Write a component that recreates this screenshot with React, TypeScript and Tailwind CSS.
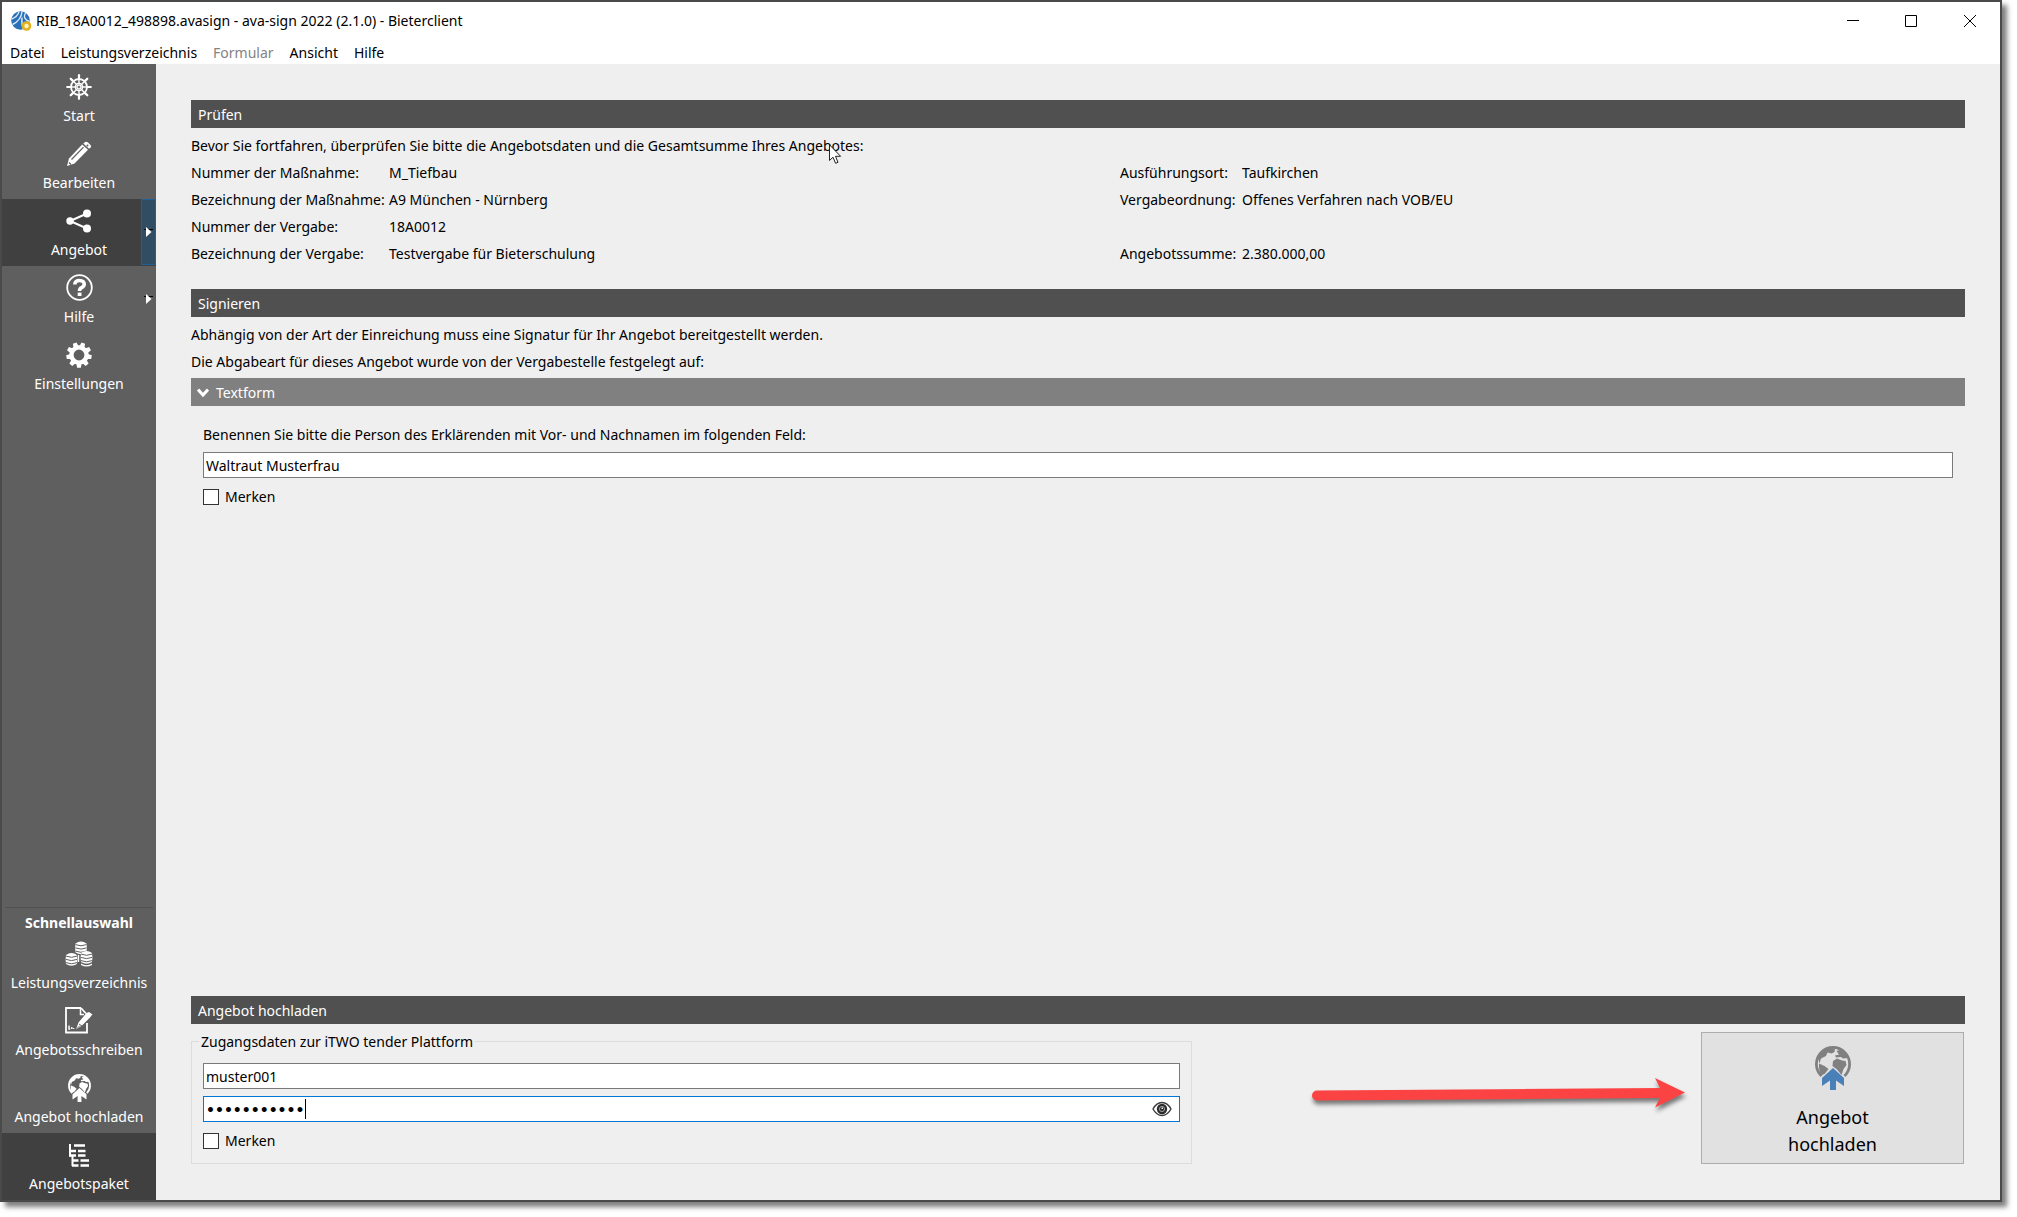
import { useState, type ReactNode } from "react";

const SPOKES = [0, 45, 90, 135, 180, 225, 270, 315];
const TEETH = [0, 40, 80, 120, 160, 200, 240, 280, 320];

function AppLogo() {
  return (
    <svg width="21" height="21" viewBox="0 0 21 21" aria-hidden="true">
      <circle cx="9.5" cy="9.5" r="9.3" fill="#2a70b8" />
      <path d="M8 0.6C7 4 5 6.500 0.600 8M11 0.500C10.500 7 7.500 10.500 1.500 13.500M14.500 2C12 6 14 9 18.500 10.500M11 6.500C10.500 11 11 15 12.500 18.500" fill="none" stroke="#d8eaf8" strokeWidth="1.400" />
      <circle cx="15.500" cy="15" r="4.800" fill="#e3b21c" />
      <circle cx="15.500" cy="15" r="2.200" fill="#fff6cf" />
    </svg>
  );
}

function WheelIcon() {
  return (
    <svg width="26" height="26" viewBox="0 0 26 26" fill="none" stroke="white" aria-hidden="true">
      <circle cx="13" cy="13" r="8" strokeWidth="1.800" />
      <circle cx="13" cy="13" r="3.600" strokeWidth="1.400" />
      {SPOKES.map((angle) => (
        <g key={angle} transform={`rotate(${angle} 13 13)`}>
          <path d="M13 12V1.500" strokeWidth="1.400" />
          <path d="M13 4V1.200" strokeWidth="2.200" strokeLinecap="round" />
        </g>
      ))}
    </svg>
  );
}

function PencilIcon() {
  return (
    <svg width="26" height="26" viewBox="0 0 26 26" aria-hidden="true">
      <path d="M1 25L3 17.500L16.200 3.500L22 8.800L8.500 22.500Z" fill="white" />
      <path d="M17.300 2.500L19.200 0.900Q20.500 0.200 22 1.400L24.500 3.900Q25.600 5.200 24.700 6.300L23.100 7.800Z" fill="white" />
      <path d="M5.500 18.500L17.500 6.200M3 21.500L5 23.500" stroke="#5f5f5f" strokeWidth="1.200" />
      <circle cx="21.500" cy="4.500" r="1" fill="#5f5f5f" />
    </svg>
  );
}

function ShareIcon() {
  return (
    <svg width="26" height="26" viewBox="0 0 26 26" fill="white" stroke="white" aria-hidden="true">
      <path d="M21 5.500L4 13L21 20.500" fill="none" strokeWidth="2" />
      <circle cx="4" cy="13" r="3.700" stroke="none" />
      <circle cx="21" cy="5.500" r="4" stroke="none" />
      <circle cx="21" cy="20.500" r="4" stroke="none" />
    </svg>
  );
}

function HelpIcon() {
  return (
    <svg width="27" height="27" viewBox="0 0 27 27" fill="none" stroke="white" aria-hidden="true">
      <circle cx="13.500" cy="13.500" r="12.300" strokeWidth="1.800" />
      <path d="M8.800 10.500Q9 6.500 13.500 6.500Q18.200 6.600 18.200 10.200Q18.200 12.200 15.600 13.600Q13.500 14.600 13.500 17" strokeWidth="3.600" />
      <path d="M11.700 18.600H15.500V22H11.700Z" fill="white" stroke="none" />
    </svg>
  );
}

function GearIcon() {
  return (
    <svg width="26" height="26" viewBox="0 0 26 26" fill="none" stroke="white" aria-hidden="true">
      <circle cx="13" cy="13" r="7.600" strokeWidth="4.400" />
      {TEETH.map((angle) => (
        <path key={angle} d="M10.400 4.500L11.100 0.300H14.900L15.600 4.500Z" fill="white" stroke="none" transform={`rotate(${angle + 20} 13 13)`} />
      ))}
    </svg>
  );
}

function Barrel({ x, y }: { x: number; y: number }) {
  return (
    <g transform={`translate(${x} ${y})`}>
      <path d="M0 2.500Q5.500 -1.500 11 2.500L11.400 7L11 11.500Q5.500 15 0 11.500L-0.400 7Z" fill="white" />
      <path d="M0 3.600Q5.500 6 11 3.600M-0.200 6.900Q5.500 9.300 11.200 6.900M0 10.100Q5.500 12.500 11 10.100" fill="none" stroke="#5f5f5f" strokeWidth="1" />
    </g>
  );
}

function BarrelsIcon() {
  return (
    <svg width="28" height="26" viewBox="0 0 28 26" aria-hidden="true">
      <Barrel x={10.500} y={0} />
      <Barrel x={1} y={11.500} />
      <path d="M13.500 14V21" stroke="white" strokeWidth="1.400" />
      <Barrel x={16} y={9.500} />
      <path d="M16 22.500Q21.500 26 27 22.500V24Q21.500 27 16 24Z" fill="white" />
    </svg>
  );
}

function LetterIcon() {
  return (
    <svg width="28" height="27" viewBox="0 0 28 27" aria-hidden="true">
      <path d="M16 1H1V25.500H22V16M16 1L21 6.500" fill="none" stroke="white" strokeWidth="1.800" />
      <path d="M15.500 1V7.500H19" fill="none" stroke="white" strokeWidth="1.500" />
      <path d="M11 22.500L13.500 15.500L21.500 6L24 5L27.500 7.500Q26 8.500 25.500 10L17 18.500Z" fill="white" />
      <path d="M14 17L17 19M10.500 23L15 18.500" stroke="#5f5f5f" strokeWidth="0.900" />
      <path d="M4 18.500V22H5.200M6.800 20V22M8.600 21V22" fill="none" stroke="white" strokeWidth="1.400" />
    </svg>
  );
}

function GlobeUpload({ width, height, globe, arrow }: { width: number; height: number; globe: string; arrow: string }) {
  return (
    <svg width={width} height={height} viewBox="0 0 36 44" aria-hidden="true">
      <path d="M6.500 30A16.600 16.600 0 1 1 29.500 30" fill="none" stroke={globe} strokeWidth="2.800" />
      <path d="M3 12L7.500 4.500L14 2L20 2.500L19.500 6L16.500 7.500L12.500 6.500L11 10L6 12.500L4.500 17.500Z" fill={globe} />
      <path d="M21.500 5L26 3.500L31 8L33 12L28 12.500L26 11L21 11.500L20 9.500L24 8.500Z" fill={globe} />
      <path d="M18 15L22 12.500L27 14.500L30.500 15L31.500 19L28.500 23L26.500 29L22 23.500L17.500 20Z" fill={globe} />
      <path d="M4 17.500L9.500 20L13.500 23L10 27.500L6.500 29.500Q3.500 25 4 17.500Z" fill={globe} />
      <path d="M18 22L29 32V40L21 34.500V44H15V34.500L7 40V32Z" fill={arrow} />
    </svg>
  );
}

function TreeIcon() {
  return (
    <svg width="22" height="24" viewBox="0 0 22 24" fill="none" stroke="white" aria-hidden="true">
      <path d="M2 1V13.500M4.500 13V23" strokeWidth="2" />
      <path d="M6 2.500H17M1 8H8M10 8H17.500M1 12.500H8M10 12.500H17.500M4 17.500H10.500M12.500 17.500H21M4 22.500H10.500M12.500 22.500H21" strokeWidth="2.400" />
    </svg>
  );
}

function EyeIcon() {
  return (
    <svg width="20" height="16" viewBox="0 0 20 16" fill="none" aria-hidden="true">
      <path d="M1 8Q4.500 1.500 10 1.500T19 8Q15.500 14.500 10 14.500T1 8Z" stroke="#3a3a3a" strokeWidth="1.400" />
      <circle cx="10" cy="8" r="5.200" fill="#2b2b2b" />
      <circle cx="10" cy="8" r="2.600" stroke="#aaa" strokeWidth="0.900" />
      <path d="M9.500 6.500H11V8H9.500Z" fill="#eee" />
    </svg>
  );
}

function MousePointer() {
  return (
    <svg width="13" height="22" viewBox="0 0 13 22" className="absolute left-[638px] top-3" aria-hidden="true">
      <path d="M0.500 0.800V16.500L4 13.200L6.600 19.300L9 18.300L6.500 12.300H11.600Z" fill="white" stroke="#222" />
    </svg>
  );
}

type NavItemProps = {
  icon: ReactNode;
  label: string;
  active?: boolean;
  flyout?: boolean;
};

function NavItem({ icon, label, active, flyout }: NavItemProps) {
  return (
    <button type="button" className={`relative flex h-[67px] w-full flex-col items-center text-white ${active ? "bg-[#404040]" : ""}`}>
      <span className="flex h-[43px] items-center justify-center">{icon}</span>
      <span className="leading-4">{label}</span>
      {flyout && (
        <span
          className={`absolute right-0 top-0 flex h-[66px] w-[15px] items-center justify-center border ${active ? "border-[#1f6096] bg-[#314d63]" : "border-transparent"}`}
        >
          <svg width="9" height="12" viewBox="0 0 9 12" aria-hidden="true">
            <path d="M0 3.500H9" stroke="black" />
            <path d="M2 1V11L7.500 6Z" fill="white" />
          </svg>
        </span>
      )}
    </button>
  );
}

function SectionBar({ title }: { title: string }) {
  return <h2 className="h-7 bg-[#505050] pl-[7px] pt-px leading-7 text-white">{title}</h2>;
}

function RememberBox({ id }: { id: string }) {
  return (
    <div className="mt-[11px] flex h-4 items-center gap-1.5">
      <input id={id} type="checkbox" className="size-4 appearance-none border border-[#333] bg-white checked:bg-[#333]" />
      <label htmlFor={id}>Merken</label>
    </div>
  );
}

const menu = ["Datei", "Leistungsverzeichnis", "Formular", "Ansicht", "Hilfe"];

const details = [
  ["Nummer der Maßnahme:", "M_Tiefbau", "Ausführungsort:", "Taufkirchen"],
  ["Bezeichnung der Maßnahme:", "A9 München - Nürnberg", "Vergabeordnung:", "Offenes Verfahren nach VOB/EU"],
  ["Nummer der Vergabe:", "18A0012", "", ""],
  ["Bezeichnung der Vergabe:", "Testvergabe für Bieterschulung", "Angebotssumme:", "2.380.000,00"],
];

function App() {
  const [person, setPerson] = useState("Waltraut Musterfrau");
  const [user, setUser] = useState("muster001");
  const [password, setPassword] = useState("geheim12345");
  const [showPassword, setShowPassword] = useState(false);

  return (
    <div className="h-screen bg-white pb-[15px] pr-[15px] font-['Noto_Sans',sans-serif] text-sm text-black">
      <div className="flex h-full flex-col border-2 border-[#4a4a4a] bg-[#efefef] shadow-[5px_5px_5px_rgba(0,0,0,0.5)]">
        <header className="bg-white">
          <div className="flex h-[38px] items-center pl-[9px]">
            <AppLogo />
            <h1 className="ml-1 flex-1">RIB_18A0012_498898.avasign - ava-sign 2022 (2.1.0) - Bieterclient</h1>
            <div className="flex">
              <button type="button" aria-label="Minimieren" className="flex h-9 w-[58px] items-center justify-center">
                <svg width="12" height="12" viewBox="0 0 12 12" stroke="black"><path d="M0 5.500H12" /></svg>
              </button>
              <button type="button" aria-label="Maximieren" className="flex h-9 w-[58px] items-center justify-center">
                <svg width="12" height="12" viewBox="0 0 12 12" fill="none" stroke="black"><path d="M0.500 0.500H11.500V11.500H0.500Z" /></svg>
              </button>
              <button type="button" aria-label="Schließen" className="flex h-9 w-[60px] items-center justify-center">
                <svg width="12" height="12" viewBox="0 0 12 12" stroke="black"><path d="M0 0L12 12M12 0L0 12" /></svg>
              </button>
            </div>
          </div>
          <nav className="flex h-6 items-center gap-4 pl-2 pt-0.5">
            {menu.map((entry) => (
              <button key={entry} type="button" disabled={entry === "Formular"} className="leading-5 disabled:text-[#838383]">
                {entry}
              </button>
            ))}
          </nav>
        </header>

        <div className="flex min-h-0 flex-1">
          <aside className="flex w-[154px] shrink-0 flex-col justify-between bg-[#5f5f5f] pt-px">
            <nav>
              <NavItem icon={<WheelIcon />} label="Start" />
              <NavItem icon={<PencilIcon />} label="Bearbeiten" />
              <NavItem icon={<ShareIcon />} label="Angebot" active flyout />
              <NavItem icon={<HelpIcon />} label="Hilfe" flyout />
              <NavItem icon={<GearIcon />} label="Einstellungen" />
            </nav>
            <nav>
              <div className="mx-[3px] border-t border-[#505050]" />
              <h2 className="h-6 pt-[5px] text-center font-bold leading-5 text-white">Schnellauswahl</h2>
              <NavItem icon={<BarrelsIcon />} label="Leistungsverzeichnis" />
              <NavItem icon={<LetterIcon />} label="Angebotsschreiben" />
              <NavItem icon={<GlobeUpload width={23} height={28} globe="white" arrow="white" />} label="Angebot hochladen" />
              <NavItem icon={<TreeIcon />} label="Angebotspaket" active />
            </nav>
          </aside>

          <main className="flex min-w-0 flex-1 flex-col px-[35px] py-9">
            <section>
              <SectionBar title="Prüfen" />
              <div className="relative mt-1 leading-[27px]">
                <p>Bevor Sie fortfahren, überprüfen Sie bitte die Angebotsdaten und die Gesamtsumme Ihres Angebotes:</p>
                <MousePointer />
                <div className="grid grid-cols-[198px_731fr_122px_723fr]">
                  {details.flat().map((text, index) => (
                    <span key={index}>{text}</span>
                  ))}
                </div>
              </div>
            </section>

            <section className="mt-[22px]">
              <SectionBar title="Signieren" />
              <div className="mt-1 leading-[27px]">
                <p>Abhängig von der Art der Einreichung muss eine Signatur für Ihr Angebot bereitgestellt werden.</p>
                <p>Die Abgabeart für dieses Angebot wurde von der Vergabestelle festgelegt auf:</p>
              </div>
              <button type="button" className="mt-[3px] flex h-7 w-full items-center gap-[7px] bg-[#808080] pl-1.5 pt-px text-white">
                <svg width="12" height="10" viewBox="0 0 12 10" fill="none" stroke="white" strokeWidth="3" aria-hidden="true">
                  <path d="M1 1.500L6 7L11 1.500" />
                </svg>
                Textform
              </button>
              <div className="px-3 pt-[15px]">
                <label htmlFor="person" className="block leading-[27px]">
                  Benennen Sie bitte die Person des Erklärenden mit Vor- und Nachnamen im folgenden Feld:
                </label>
                <input
                  id="person"
                  type="text"
                  value={person}
                  onChange={(e) => setPerson(e.target.value)}
                  className="mt-1 block h-[26px] w-full border border-[#7a7a7a] bg-white px-[2px] outline-none"
                />
                <RememberBox id="remember-person" />
              </div>
            </section>

            <section className="mt-auto">
              <SectionBar title="Angebot hochladen" />
              <div className="mt-1 flex">
                <fieldset className="w-[56.4%] border border-[#dcdcdc] px-[7px] pb-3.5">
                  <legend className="px-[2px] leading-[27px]">Zugangsdaten zur iTWO tender Plattform</legend>
                  <div className="px-1 pt-2">
                    <input
                      type="text"
                      aria-label="Benutzername"
                      value={user}
                      onChange={(e) => setUser(e.target.value)}
                      className="block h-[26px] w-full border border-[#7a7a7a] bg-white px-[2px] outline-none"
                    />
                    <div className="relative mt-[7px]">
                      <input
                        type={showPassword ? "text" : "password"}
                        aria-label="Passwort"
                        value={password}
                        onChange={(e) => setPassword(e.target.value)}
                        className={`block h-[26px] w-full border border-[#0078d7] bg-white pl-[2px] pr-9 outline-none ${showPassword ? "" : "pt-0.5 font-['DejaVu_Sans',sans-serif] font-bold"}`}
                      />
                      <span className="absolute left-[102px] top-[3px] h-5 w-px bg-black" />
                      <button
                        type="button"
                        aria-label="Passwort anzeigen"
                        onClick={() => setShowPassword(!showPassword)}
                        className="absolute right-2 top-[5px]"
                      >
                        <EyeIcon />
                      </button>
                    </div>
                    <RememberBox id="remember-login" />
                  </div>
                </fieldset>

                <div className="flex flex-1 items-center justify-end pb-1.5 pr-2">
                  <svg width="382" height="42" viewBox="0 0 382 42" className="drop-shadow-[1px_4px_2px_rgba(0,0,0,0.5)]" aria-hidden="true">
                    <path d="M6 18.500L349 16L344 6L374 20.500L344 35.500L349 26L6 28.500A5 5 0 0 1 6 18.500Z" fill="#fc4343" />
                  </svg>
                </div>

                <button type="button" className="mr-px mt-1 flex w-[263px] flex-col items-center border border-[#adadad] bg-[#e1e1e1] pt-[13px] text-lg leading-[27px]">
                  <GlobeUpload width={36} height={44} globe="#808080" arrow="#4a80b8" />
                  <span className="mt-3.5">Angebot</span>
                  <span>hochladen</span>
                </button>
              </div>
            </section>
          </main>
        </div>
      </div>
    </div>
  );
}

export default App;
